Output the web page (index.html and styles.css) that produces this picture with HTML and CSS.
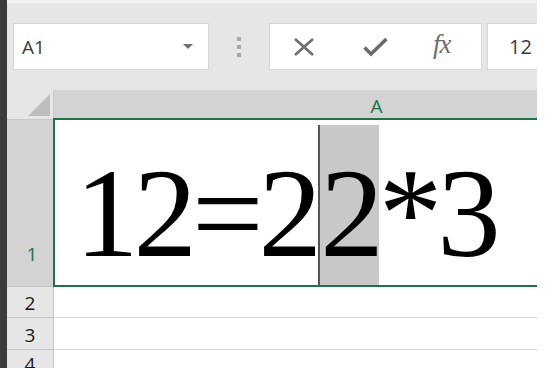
FILE: index.html
```html
<!DOCTYPE html>
<html>
<head>
<meta charset="utf-8">
<link rel="stylesheet" href="styles.css">
</head>
<body>
<div class="app">
  <div class="strip"></div>
  <div class="main">
    <div class="toolbar">
      <div class="namebox">
        <span class="name">A1</span>
        <svg class="caret" width="10" height="6" viewBox="0 0 10 6"><path d="M0 0H10L5 5Z" fill="#707070"/></svg>
      </div>
      <div class="dots"><i></i><i></i><i></i></div>
      <div class="fbox">
        <svg class="ico" width="22" height="18" viewBox="0 0 22 18"><path d="M2 1L20 17M20 1L2 17" stroke="#6b6b6b" stroke-width="2.6" fill="none"/></svg>
        <svg class="ico" width="25" height="20" viewBox="0 0 25 20"><path d="M1.5 10.5L8 17L23.5 2" stroke="#6b6b6b" stroke-width="3.6" fill="none"/></svg>
        <span class="fx">fx</span>
      </div>
      <div class="input"><span>12</span></div>
    </div>
    <div class="sheet">
      <div class="corner"><svg width="22" height="22" viewBox="0 0 22 22"><path d="M22 0V22H0Z" fill="#bdbdbd"/></svg></div>
      <div class="colhead"><span>A</span></div>
      <div class="rowhead r1 sel"><span>1</span></div>
      <div class="cell c1">
        <div class="text"><span>12=2</span><span class="cursor"></span><span class="hl">2</span><span>*3</span></div>
      </div>
      <div class="rowhead r2"><span>2</span></div>
      <div class="cell c2"></div>
      <div class="rowhead r3"><span>3</span></div>
      <div class="cell c3"></div>
      <div class="rowhead r4"><span>4</span></div>
      <div class="cell c4"></div>
    </div>
  </div>
</div>
</body>
</html>
```

FILE: styles.css
```css
html, body { margin: 0; padding: 0; background: #fff; }
body { width: 554px; height: 368px; overflow: hidden; font-family: "Open Sans", "Liberation Sans", sans-serif; }
.app { display: flex; height: 368px; }
.strip { width: 7px; background: #3b3b3b; flex: none; }
.main { width: 530px; flex: none; overflow: hidden; display: flex; flex-direction: column; }
.toolbar { flex: none; height: 67px; border-top: 3px solid #f2f2f2; background: #e6e6e6; display: flex; align-items: flex-start; padding-top: 20px; box-sizing: content-box; }
.namebox { margin-left: 6px; height: 45px; background: #fff; border: 1px solid #d6d6d6; display: flex; align-items: center; justify-content: space-between; padding: 0 15px 0 8px; box-sizing: content-box; width: 171px; }
.name { font-size: 19px; color: #3a3a3a; }
.dots { width: 60px; height: 47px; display: flex; flex-direction: column; align-items: center; justify-content: center; gap: 4px; }
.dots i { width: 4px; height: 4px; background: #a9a9a9; display: block; }
.fbox { height: 45px; background: #fff; border: 1px solid #d6d6d6; display: flex; align-items: center; padding-left: 23px; box-sizing: content-box; width: 188px; }
.fbox .ico:nth-child(1) { margin-right: 48px; }
.fbox .ico:nth-child(2) { margin-right: 45px; }
.fx { font-family: "Liberation Serif", "DejaVu Serif", serif; font-style: italic; font-size: 27px; color: #6b6b6b; margin-top: -4px; letter-spacing: -1px; }
.input { margin-left: 5px; flex: 1; min-width: 0; height: 45px; background: #fff; border: 1px solid #d6d6d6; border-right: none; display: flex; align-items: center; padding-left: 21px; overflow: hidden; }
.input span { font-size: 20px; color: #3a3a3a; }
.sheet { display: grid; grid-template-columns: 47px minmax(0, 1fr); grid-template-rows: 30px 167px 31px 32px 1fr; flex: 1; }
.corner { background: #e6e6e6; display: flex; align-items: flex-end; justify-content: flex-end; padding: 0 3px 3px 0; border-right: 1px solid #c8c8c8; border-bottom: 1px solid #c8c8c8; }
.colhead { background: #d3d3d3; border-bottom: 2px solid #217346; display: flex; align-items: center; justify-content: center; }
.colhead span { font-size: 19px; color: #217346; margin-left: 162px; margin-top: 4px; }
.rowhead { background: #e6e6e6; border-bottom: 1px solid #c6c6c6; border-right: 1px solid #c6c6c6; display: flex; align-items: flex-end; justify-content: center; font-size: 19px; color: #1a1a1a; }
.rowhead span { line-height: 28px; }
.rowhead.sel { background: #d3d3d3; color: #217346; border-right: none; }
.rowhead.r1 span { margin-bottom: 18px; margin-left: 3px; }
.rowhead.r4 { border-bottom: none; }
.cell { border-bottom: 1px solid #dadada; min-width: 0; overflow: hidden; }
.c1 { border: 2px solid #217346; border-right: none; margin-left: -1px; margin-top: -2px; box-sizing: border-box; }
.text { font-family: "Liberation Serif", "DejaVu Serif", serif; font-size: 127px; color: #000; padding-left: 20px; margin-top: 5px; display: flex; height: 160px; letter-spacing: -5px; white-space: nowrap; }
.text span { display: block; line-height: 144px; padding-top: 16px; }
.text .cursor { width: 2px; background: #555; margin-left: 1px; padding: 0; }
.hl { background: #c8c8c8; }
```
